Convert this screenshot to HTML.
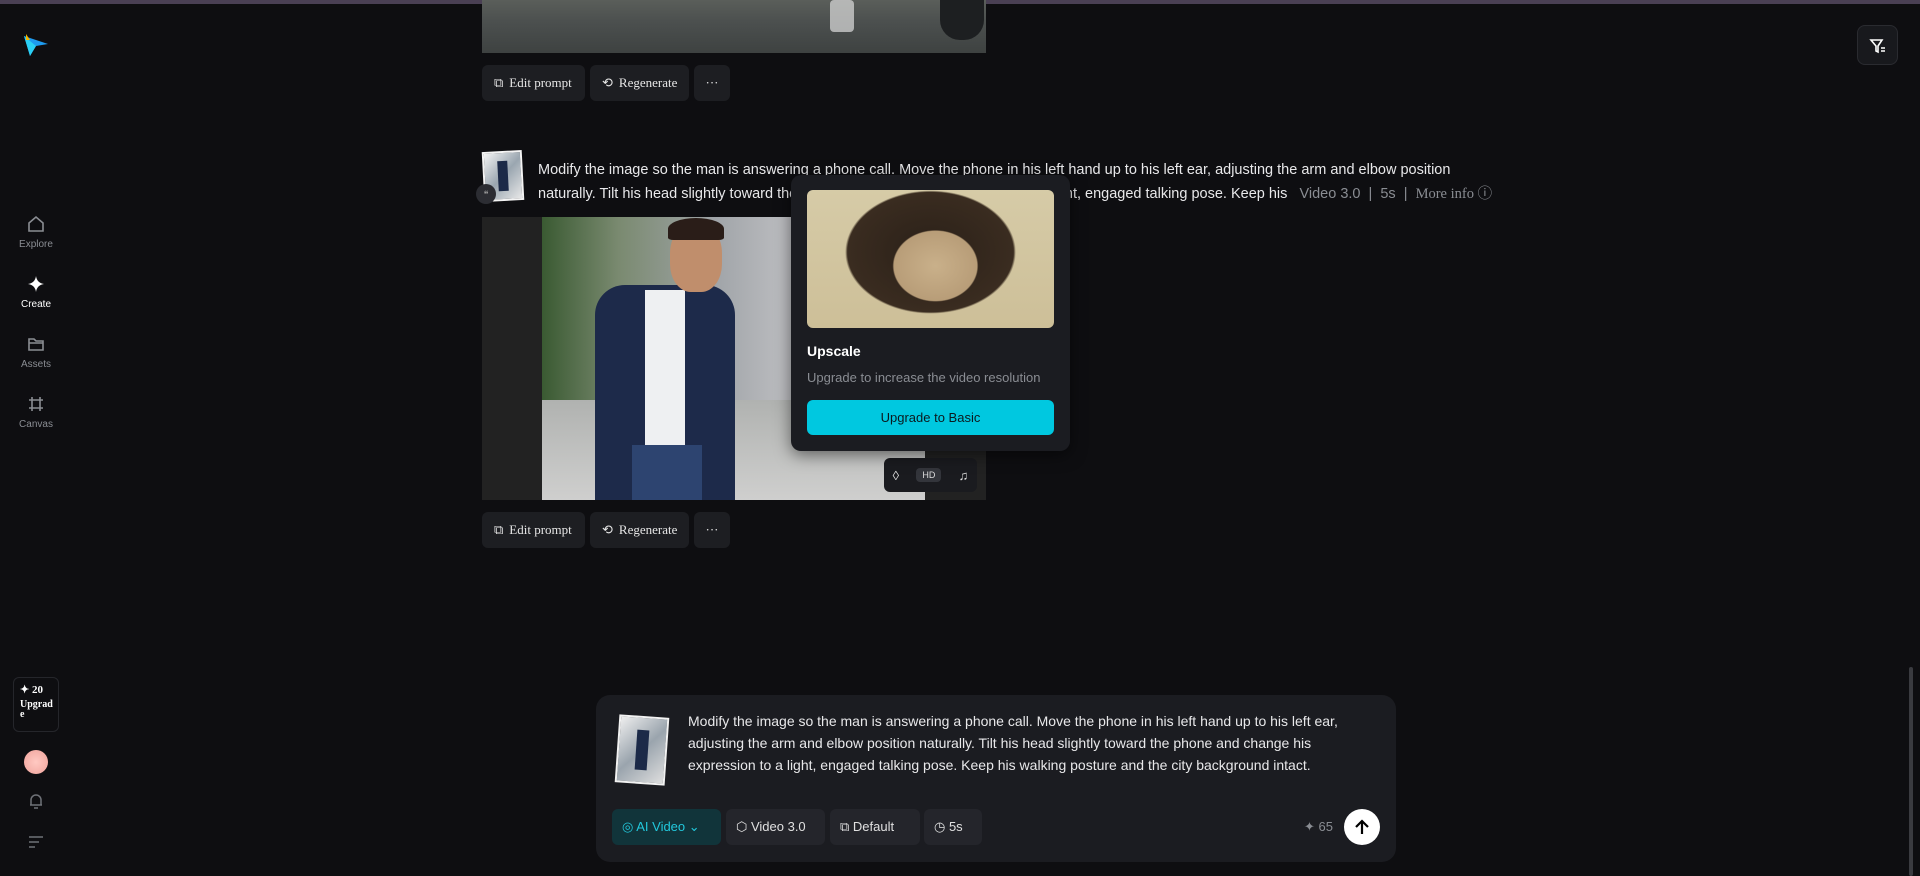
<!DOCTYPE html>
<html><head><meta charset="utf-8"><style>
*{box-sizing:border-box;margin:0;padding:0}
body{width:1920px;height:876px;background:#0e0e11;font-family:"Liberation Sans",sans-serif;color:#e8e8ea;position:relative;overflow:hidden}
.a{position:absolute}
.topline{left:0;top:0;width:1920px;height:4px;background:#4a4054}
.btn{position:absolute;height:36px;background:#1d1e22;border-radius:6px;color:#e6e6e6;font-family:"Liberation Serif",serif;font-size:13px;display:flex;align-items:center;padding:0 12px;gap:6px}
.nav{position:absolute;left:0;width:72px;text-align:center;font-size:10px;color:#8a8d93}
.nav svg{display:block;margin:0 auto 5px}
.msg{left:538px;top:158px;width:960px;font-size:14.5px;line-height:24px;color:#e8e8ea}
.chip{position:absolute;top:809px;height:36px;background:#24252b;border-radius:6px;display:flex;align-items:center;gap:6px;padding:0 10px;font-size:13px;color:#e0e0e0}
</style></head><body>
<div class="a topline"></div>
<svg class="a" style="left:22px;top:32px" width="28" height="26" viewBox="0 0 28 26"><path d="M2 4 L26 12 L14 14 L8 24 Z" fill="#1e9bf0"/><path d="M2 4 L14 14 L8 24Z" fill="#2ad0f5"/><path d="M4 2 L8 8 L4 8Z" fill="#f5b700"/></svg>
<div class="nav" style="top:214px"><svg width="20" height="20" viewBox="0 0 20 20" fill="none" stroke="#8a8d93" stroke-width="1.6"><path d="M3 9 L10 3 L17 9 V17 H3 Z"/></svg>Explore</div>
<div class="nav" style="top:274px;color:#fff"><svg width="20" height="20" viewBox="0 0 20 20"><path d="M10 2 Q11 9 18 10 Q11 11 10 18 Q9 11 2 10 Q9 9 10 2Z" fill="#fff"/></svg>Create</div>
<div class="nav" style="top:334px"><svg width="20" height="20" viewBox="0 0 20 20" fill="none" stroke="#8a8d93" stroke-width="1.6"><path d="M3 5 H8 L10 7 H17 V16 H3 Z M3 9 H17"/></svg>Assets</div>
<div class="nav" style="top:394px"><svg width="20" height="20" viewBox="0 0 20 20" fill="none" stroke="#8a8d93" stroke-width="1.6"><path d="M6 3 V17 M14 3 V17 M3 6 H17 M3 14 H17"/></svg>Canvas</div>
<div class="a" style="left:13px;top:677px;width:46px;height:55px;border:1px solid #25262b;border-radius:6px;font-family:'Liberation Serif',serif;font-size:10px;font-weight:bold;padding:7px 6px;line-height:10px;color:#fff"><div style="font-size:11px;margin-bottom:5px">✦ 20</div>Upgrad e</div>
<div class="a" style="left:24px;top:750px;width:24px;height:24px;border-radius:50%;background:radial-gradient(circle,#ffc9c2,#f0a39c)"></div>
<svg class="a" style="left:27px;top:792px" width="18" height="18" viewBox="0 0 18 18" fill="none" stroke="#6f7278" stroke-width="1.5"><path d="M4 13 V8 A5 5 0 0 1 14 8 V13 Z M3 13 H15 M7 16 H11"/></svg>
<svg class="a" style="left:27px;top:834px" width="18" height="14" viewBox="0 0 18 14" stroke="#6f7278" stroke-width="1.5"><path d="M2 3 H16 M2 8 H12 M2 13 H8"/></svg>
<div class="a" style="left:1857px;top:25px;width:41px;height:40px;background:#18191d;border:1px solid #2a2b30;border-radius:8px"><svg style="margin:11px" width="18" height="18" viewBox="0 0 18 18" fill="none" stroke="#fff" stroke-width="1.6"><path d="M2 3 H13 L9 9 V15 L7 14 V9 Z M12 11 H16 M12 14 H16"/></svg></div>
<div class="a" style="left:1909px;top:667px;width:4px;height:209px;background:#3a3b40;border-radius:2px"></div>
<div class="a" style="left:482px;top:0;width:504px;height:53px;background:linear-gradient(180deg,#5a5e5a 0%,#4c504f 40%,#3e4241 100%)"></div>
<div class="a" style="left:830px;top:0;width:24px;height:32px;background:#ddd;border-radius:4px;opacity:.7"></div>
<div class="a" style="left:940px;top:0;width:44px;height:40px;background:#1d1f21;border-radius:0 0 20px 20px"></div>
<div class="btn" style="left:482px;top:65px;width:103px"><span>⧉</span>Edit prompt</div>
<div class="btn" style="left:590px;top:65px;width:99px"><span>⟲</span>Regenerate</div>
<div class="btn" style="left:694px;top:65px;width:36px;justify-content:center;padding:0">···</div>
<div class="a" style="left:483px;top:151px;width:40px;height:50px;background:linear-gradient(135deg,#f4f4f4,#9aa6b0 50%,#e8e8e8);border:2px solid #f4f4f4;transform:rotate(-3deg)"><div style="margin:8px auto;width:10px;height:30px;background:#1c2a48"></div></div>
<div class="a" style="left:476px;top:184px;width:20px;height:20px;border-radius:50%;background:#2c2d33;font-size:9px;text-align:center;line-height:20px;color:#999">❝</div>
<div class="a msg">Modify the image so the man is answering a phone call. Move the phone in his left hand up to his left ear, adjusting the arm and elbow position<br>naturally. Tilt his head slightly toward the phone and change his expression to a light, engaged talking pose. Keep his <span style="color:#8a8d93">&nbsp; Video 3.0 &nbsp;|&nbsp; 5s &nbsp;|&nbsp; <span style="font-family:'Liberation Serif',serif">More info ⓘ</span></span></div>
<div class="a" style="left:482px;top:217px;width:504px;height:283px;background:#222"></div>
<div class="a" style="left:542px;top:217px;width:383px;height:283px;background:linear-gradient(90deg,#3a5a32 0%,#7a8a70 20%,#a0a4a8 45%,#c5c5c8 70%,#8d9093 100%)"></div>
<div class="a" style="left:542px;top:400px;width:383px;height:100px;background:linear-gradient(180deg,#b0b2b0,#cfcfce)"></div>
<div class="a" style="left:595px;top:285px;width:140px;height:215px;background:#1d2a4a;border-radius:30px 30px 0 0"></div>
<div class="a" style="left:645px;top:290px;width:40px;height:155px;background:#eef0f2"></div>
<div class="a" style="left:632px;top:445px;width:70px;height:55px;background:#2d4470"></div>
<div class="a" style="left:670px;top:222px;width:52px;height:70px;background:#c08e6c;border-radius:45% 45% 40% 40%"></div>
<div class="a" style="left:668px;top:218px;width:56px;height:22px;background:#2a1d18;border-radius:50% 50% 10% 10%"></div>
<div class="a" style="left:884px;top:458px;width:93px;height:34px;background:#1a1b1f;border-radius:6px;display:flex;align-items:center;justify-content:space-around;color:#ddd;font-size:13px"><span>◊</span><span style="background:#33353b;padding:2px 6px;border-radius:4px;font-size:9px">HD</span><span>♫</span></div>
<div class="a" style="left:791px;top:175px;width:279px;height:276px;background:#1b1c21;border-radius:10px;box-shadow:0 4px 16px rgba(0,0,0,.5)"></div>
<div class="a" style="left:807px;top:190px;width:247px;height:138px;border-radius:6px;background:radial-gradient(ellipse 28% 42% at 52% 55%,#c9b08a 0%,#b89d78 60%,transparent 62%),radial-gradient(ellipse 48% 62% at 50% 45%,#2a2018 0%,#3a2c20 70%,transparent 72%),linear-gradient(#d6cba7,#cdbf98)"></div>
<div class="a" style="left:807px;top:343px;font-size:14px;font-weight:bold;color:#fff">Upscale</div>
<div class="a" style="left:807px;top:370px;font-size:13px;color:#8a8d93">Upgrade to increase the video resolution</div>
<div class="a" style="left:807px;top:400px;width:247px;height:35px;background:#00c8e0;border-radius:6px;text-align:center;line-height:35px;font-size:13px;color:#0b1a1f">Upgrade to Basic</div>
<div class="btn" style="left:482px;top:512px;width:103px"><span>⧉</span>Edit prompt</div>
<div class="btn" style="left:590px;top:512px;width:99px"><span>⟲</span>Regenerate</div>
<div class="btn" style="left:694px;top:512px;width:36px;justify-content:center;padding:0">···</div>
<div class="a" style="left:596px;top:695px;width:800px;height:167px;background:#1b1c21;border-radius:14px"></div>
<div class="a" style="left:617px;top:716px;width:50px;height:68px;background:linear-gradient(135deg,#eee,#9aa4ad 50%,#dedede);border:2px solid #f2f2f2;transform:rotate(4deg)"><div style="margin:12px auto;width:12px;height:40px;background:#1c2a48"></div></div>
<div class="a" style="left:688px;top:710px;width:676px;font-size:14px;line-height:22px;color:#e8e8ea">Modify the image so the man is answering a phone call. Move the phone in his left hand up to his left ear, adjusting the arm and elbow position naturally. Tilt his head slightly toward the phone and change his expression to a light, engaged talking pose. Keep his walking posture and the city background intact.</div>
<div class="chip" style="left:612px;width:109px;background:#11343a;color:#22c8dc">◎ AI Video ⌄</div>
<div class="chip" style="left:726px;width:99px">⬡ Video 3.0</div>
<div class="chip" style="left:830px;width:90px">⧉ Default</div>
<div class="chip" style="left:924px;width:58px">◷ 5s</div>
<div class="a" style="left:1304px;top:819px;font-size:13px;color:#8a8d93">✦ 65</div>
<div class="a" style="left:1344px;top:809px;width:36px;height:36px;border-radius:50%;background:#fff"><svg style="margin:9px" width="18" height="18" viewBox="0 0 18 18" fill="none" stroke="#000" stroke-width="2.2"><path d="M9 16 V3 M3 9 L9 3 L15 9"/></svg></div>
</body></html>
